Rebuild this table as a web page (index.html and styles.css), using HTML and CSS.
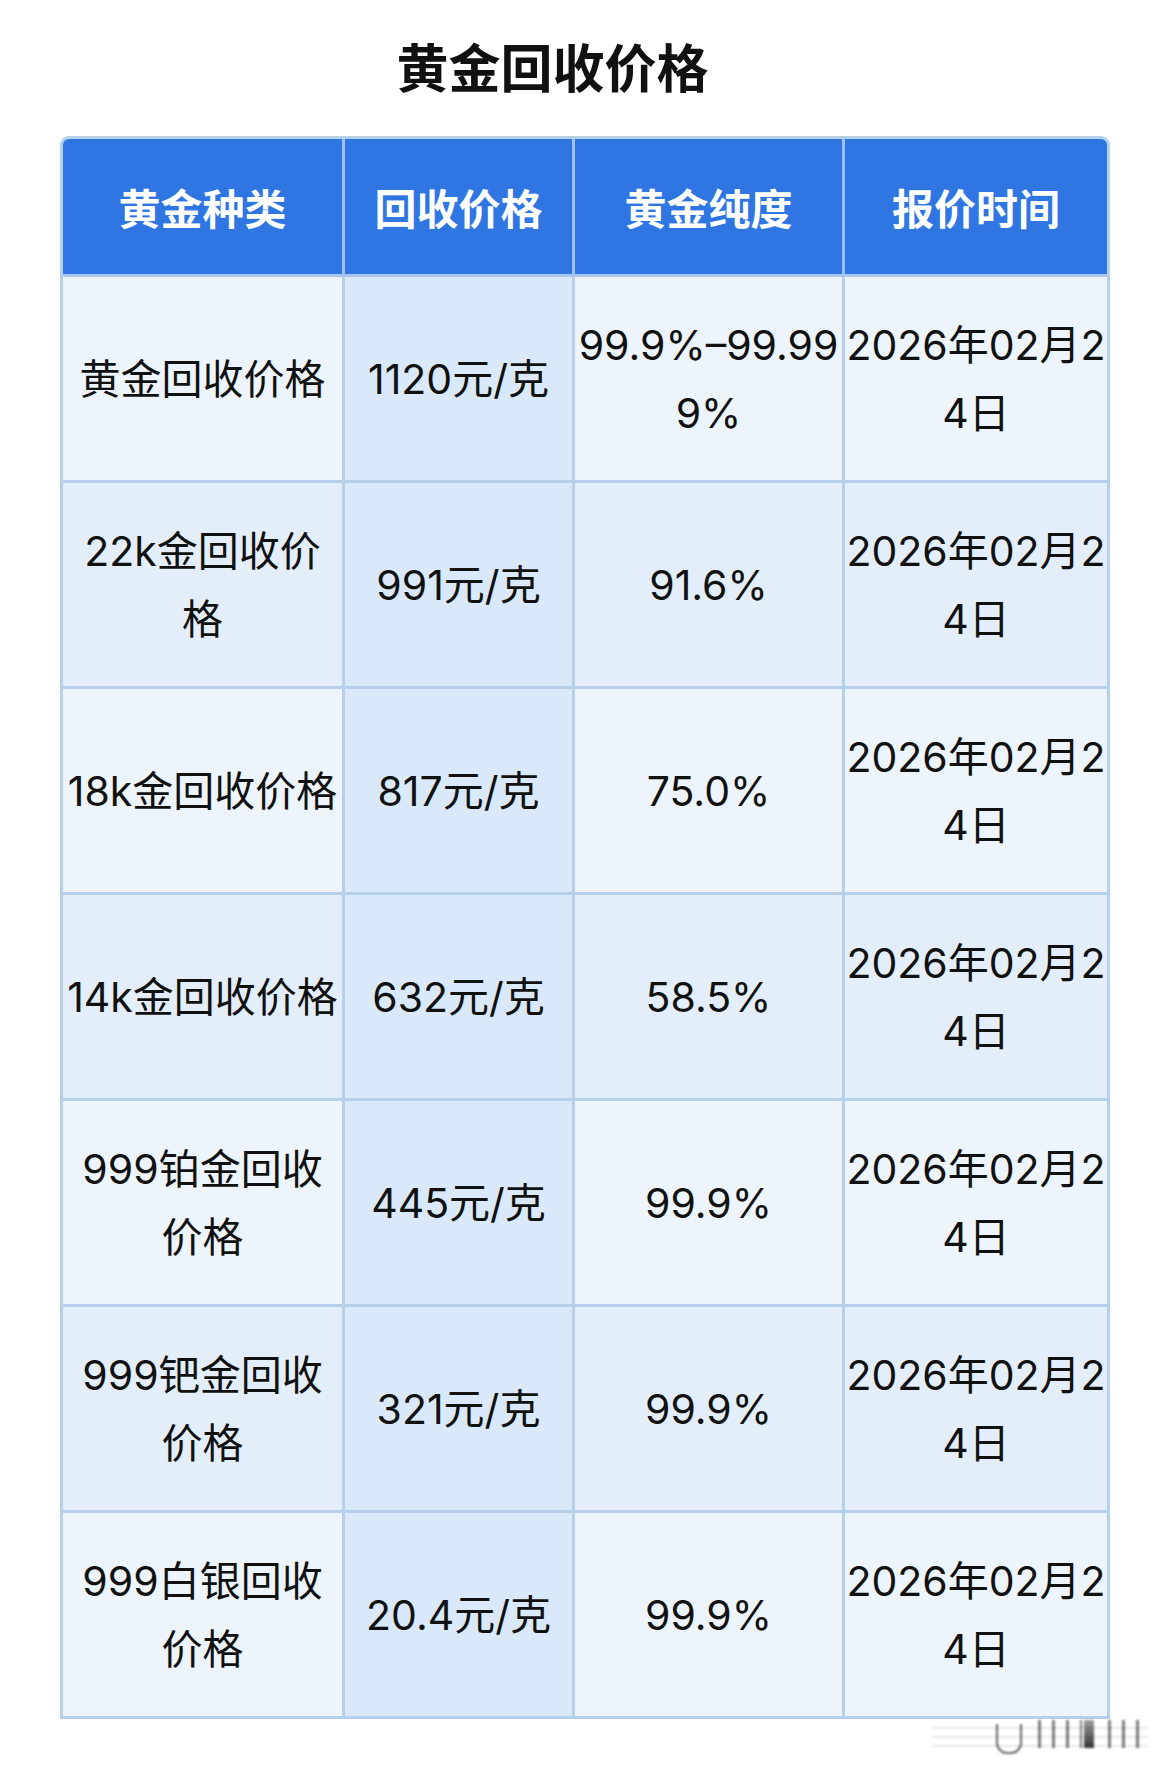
FILE: index.html
```html
<!DOCTYPE html>
<html lang="zh-CN">
<head>
<meta charset="utf-8">
<title>黄金回收价格</title>
<link rel="stylesheet" href="styles.css">
</head>
<body>
<div class="page">
  <h1 class="title">黄金回收价格</h1>
  <div class="table-wrap">
    <table class="price-table">
      <colgroup>
        <col class="c1"><col class="c2"><col class="c3"><col class="c4">
      </colgroup>
      <thead>
        <tr><th>黄金种类</th><th>回收价格</th><th>黄金纯度</th><th>报价时间</th></tr>
      </thead>
      <tbody>
        <tr><td>黄金回收价格</td><td>1120元/克</td><td>99.9%–99.99<br>9%</td><td>2026年02月2<br>4日</td></tr>
        <tr><td>22k金回收价<br>格</td><td>991元/克</td><td>91.6%</td><td>2026年02月2<br>4日</td></tr>
        <tr><td>18k金回收价格</td><td>817元/克</td><td>75.0%</td><td>2026年02月2<br>4日</td></tr>
        <tr><td>14k金回收价格</td><td>632元/克</td><td>58.5%</td><td>2026年02月2<br>4日</td></tr>
        <tr><td>999铂金回收<br>价格</td><td>445元/克</td><td>99.9%</td><td>2026年02月2<br>4日</td></tr>
        <tr><td>999钯金回收<br>价格</td><td>321元/克</td><td>99.9%</td><td>2026年02月2<br>4日</td></tr>
        <tr><td>999白银回收<br>价格</td><td>20.4元/克</td><td>99.9%</td><td>2026年02月2<br>4日</td></tr>
      </tbody>
    </table>
    <div class="watermark" aria-hidden="true">
      <span class="wm-lines"></span>
      <span class="wm-u"></span>
      <span class="wm-bars"></span>
      <span class="wm-block"></span>
      <span class="wm-bars wm-bars-end"></span>
    </div>
  </div>
</div>
</body>
</html>
```

FILE: styles.css
```css
html, body {
  margin: 0;
  padding: 0;
  background: #ffffff;
}

body {
  font-family: "Inter", "Noto Sans CJK SC", sans-serif;
  color: #111111;
}

.page {
  width: 1169px;
  min-height: 1775px;
  padding-top: 35px;
  box-sizing: border-box;
}

.title {
  margin: 0;
  height: 62px;
  line-height: 62px;
  font-family: "Noto Sans CJK SC", sans-serif;
  font-size: 52px;
  font-weight: 700;
  text-align: center;
  padding-right: 64px;
  color: #111111;
}

.table-wrap {
  margin-top: 39px;
  margin-left: 60px;
  width: 1050px;
}

.price-table {
  width: 1050px;
  table-layout: fixed;
  border-collapse: separate;
  border-spacing: 0;
  border: 3px solid #b6cfeb;
  border-radius: 9px 9px 0 0;
  overflow: hidden;
  background: #b6cfeb;
}

.c1 { width: 282px; }
.c2 { width: 230px; }
.c3 { width: 270px; }
.c4 { width: 262px; }

.price-table th,
.price-table td {
  padding: 0;
  text-align: center;
  vertical-align: middle;
  white-space: nowrap;
  border-right: 3px solid #b6cfeb;
  border-bottom: 3px solid #b6cfeb;
  font-size: 41px;
  line-height: 68px;
}

.price-table th:last-child,
.price-table td:last-child {
  border-right: none;
}

.price-table tbody tr:last-child td {
  border-bottom: none;
}

.price-table th {
  height: 135px;
  background: #2f76e3;
  color: #ffffff;
  font-family: "Noto Sans CJK SC", sans-serif;
  font-size: 42px;
  font-weight: 700;
  border-right-color: #9fc0ee;
  border-bottom-color: #a9c6ee;
}

.price-table td {
  height: 203px;
  background: #edf4fc;
  color: #111111;
}

.price-table tbody tr:nth-child(even) td {
  background: #e4eefa;
}

.price-table tbody td:nth-child(2),
.price-table tbody tr:nth-child(even) td:nth-child(2) {
  background: #d9e9fa;
}

/* faint blurred watermark just below the bottom-right corner */
.watermark {
  display: flex;
  margin-top: 1px;
  margin-left: 872px;
  width: 216px;
  height: 34px;
  filter: blur(0.8px);
  background: repeating-linear-gradient(180deg, transparent 0 7px, rgba(175,175,175,0.3) 7px 9px);
}

.wm-lines {
  width: 64px;
}

.wm-u {
  width: 22px;
  margin: 4px 8px 0 0;
  border: 2px solid rgba(40,40,40,0.7);
  border-top: none;
  border-radius: 0 0 11px 11px;
}

.wm-bars {
  width: 52px;
  margin-bottom: 6px;
  background: repeating-linear-gradient(90deg, transparent 0 8px, rgba(40,40,40,0.6) 8px 11px, transparent 11px 14px);
}

.wm-block {
  width: 10px;
  margin: 0 6px 6px 2px;
  background: linear-gradient(180deg, rgba(60,60,60,0.5), rgba(20,20,20,0.85));
}

.wm-bars-end {
  flex: 1;
  width: auto;
}
```
